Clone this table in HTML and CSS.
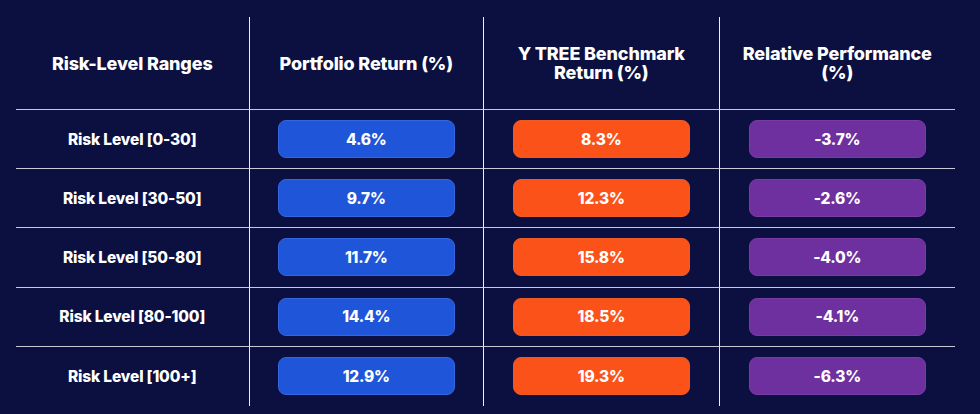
FILE: index.html
```html
<!DOCTYPE html>
<html lang="en">
<head>
<meta charset="utf-8">
<title>Risk-Level Performance</title>
<link rel="stylesheet" href="styles.css">
</head>
<body>
<div class="page">
  <div class="table">
    <div class="cell head">Risk-Level Ranges</div>
    <div class="cell head">Portfolio Return (%)</div>
    <div class="cell head">Y TREE Benchmark<br>Return (%)</div>
    <div class="cell head last">Relative Performance<br>(%)</div>

    <div class="cell label">Risk Level [0-30]</div>
    <div class="cell"><span class="pill blue">4.6%</span></div>
    <div class="cell"><span class="pill orange">8.3%</span></div>
    <div class="cell last"><span class="pill purple">-3.7%</span></div>

    <div class="cell label">Risk Level [30-50]</div>
    <div class="cell"><span class="pill blue">9.7%</span></div>
    <div class="cell"><span class="pill orange">12.3%</span></div>
    <div class="cell last"><span class="pill purple">-2.6%</span></div>

    <div class="cell label">Risk Level [50-80]</div>
    <div class="cell"><span class="pill blue">11.7%</span></div>
    <div class="cell"><span class="pill orange">15.8%</span></div>
    <div class="cell last"><span class="pill purple">-4.0%</span></div>

    <div class="cell label">Risk Level [80-100]</div>
    <div class="cell"><span class="pill blue">14.4%</span></div>
    <div class="cell"><span class="pill orange">18.5%</span></div>
    <div class="cell last"><span class="pill purple">-4.1%</span></div>

    <div class="cell label bottom">Risk Level [100+]</div>
    <div class="cell bottom"><span class="pill blue">12.9%</span></div>
    <div class="cell bottom"><span class="pill orange">19.3%</span></div>
    <div class="cell bottom last"><span class="pill purple">-6.3%</span></div>
  </div>
</div>
</body>
</html>
```

FILE: styles.css
```css
html, body {
  margin: 0;
  padding: 0;
  background: #0b1040;
}
body {
  width: 980px;
  height: 414px;
  overflow: hidden;
  font-family: Inter, "Noto Sans", "Liberation Sans", sans-serif;
  color: #ffffff;
}
.page {
  padding: 17px 25px 0 16px;
}
.table {
  width: 939px;
  height: 389px;
  display: grid;
  grid-template-columns: 233.5px 234.5px 235.5px 235.5px;
  grid-template-rows: 93px repeat(5, 1fr);
}
.cell {
  display: flex;
  align-items: center;
  justify-content: center;
  text-align: center;
  border-right: 1.5px solid #eeeef4;
  border-bottom: 1.5px solid #c9c9d6;
}
.cell.last {
  border-right: none;
}
.cell.bottom {
  border-bottom: none;
}
.head {
  font-size: 18px;
  font-weight: 800;
  line-height: 19px;
  letter-spacing: -0.15px;
}
.label {
  font-size: 15.5px;
  font-weight: 800;
  letter-spacing: -0.15px;
}
.pill {
  width: 177px;
  height: 38px;
  box-sizing: border-box;
  border-radius: 8px;
  display: flex;
  align-items: center;
  justify-content: center;
  font-size: 15.5px;
  font-weight: 800;
  letter-spacing: -0.2px;
}
.blue {
  background: #1f55d8;
  border: 1px solid #3466e0;
}
.orange {
  background: #fb521a;
  border: 1px solid #f05a25;
}
.purple {
  background: #6e2f9f;
  border: 1px solid #7a3aa8;
}
```
